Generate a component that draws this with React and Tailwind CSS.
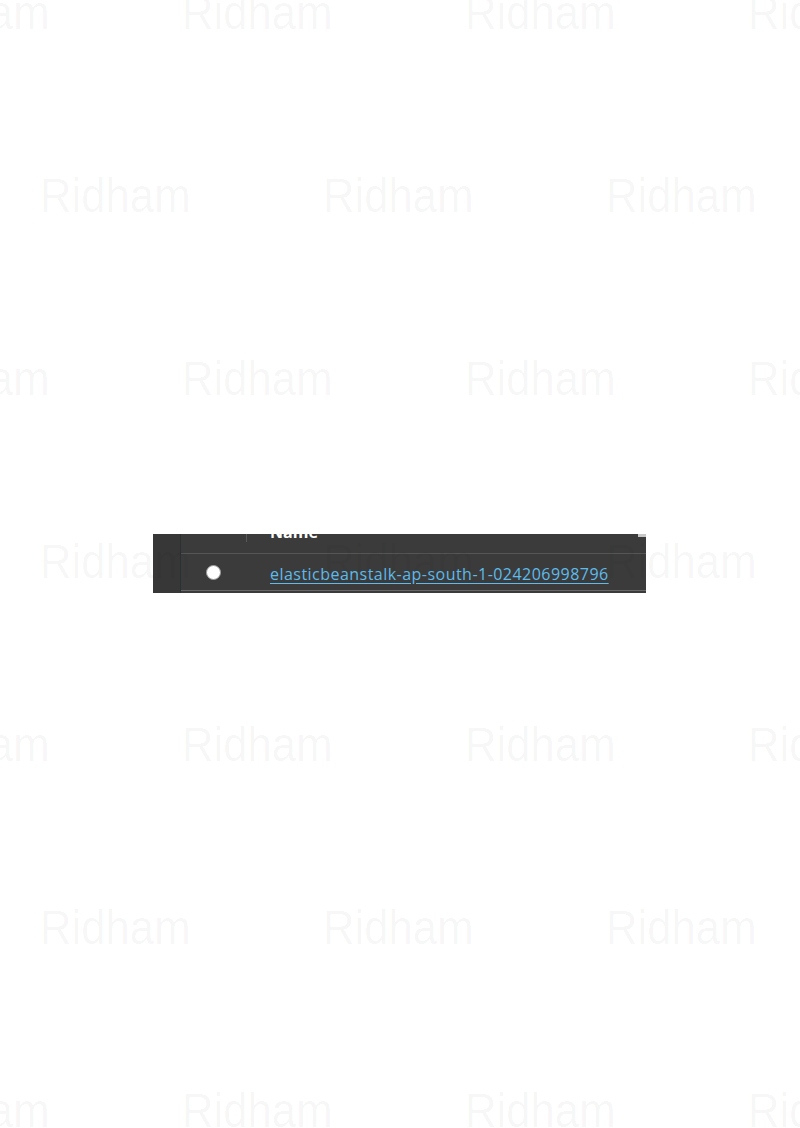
import React from "react";

const evenCols = [-101, 182, 465, 748];
const oddCols = [40, 323, 606];
const rows = [-11, 172, 355, 538, 721, 904, 1087];

function Watermark() {
  const marks = [];
  rows.forEach((top, i) => {
    const cols = i % 2 === 0 ? evenCols : oddCols;
    cols.forEach((left, j) => {
      marks.push(
        <span
          key={`${i}-${j}`}
          className="absolute origin-top-left scale-x-[0.91] text-[48px] leading-none whitespace-nowrap text-[rgba(0,0,0,0.04)]"
          style={{ top, left, fontFamily: '"Liberation Sans", Arial, sans-serif' }}
        >
          Ridham
        </span>
      );
    });
  });
  return <div className="pointer-events-none absolute inset-0 overflow-hidden">{marks}</div>;
}

export default function App() {
  return (
    <div className="relative w-[800px] h-[1128px] bg-white overflow-hidden">
      <div className="pt-[534px] pl-[153px]">
        <div
          className="flex w-[493px] h-[59px] overflow-hidden bg-[#3b3b3b]"
          style={{ fontFamily: '"Open Sans", "Noto Sans", sans-serif' }}
        >
          <div className="w-[28px] shrink-0 bg-[#373737] border-r border-[#2a3134]" />
          <div className="flex-1 flex flex-col">
            <div className="relative h-[20px] flex border-b border-[#565656]">
              <div className="w-[66px] shrink-0 flex justify-end">
                <div className="w-px h-[8px] bg-[#585858]" />
              </div>
              <div className="pl-[23px]">
                <div className="-mt-[10px] text-[16px] leading-[16px] font-bold text-white">Name</div>
              </div>
              <div className="absolute right-0 top-0 w-[8px] h-[3px] bg-[#c8c8c8]" />
            </div>
            <div className="h-[37px] flex items-center border-b border-[#686868]">
              <div className="w-[65px] shrink-0 flex justify-center">
                <div className="w-[15px] h-[15px] rounded-full bg-white border border-[#9a9a9a]" />
              </div>
              <div className="pl-[24px] pt-[3px]">
                <a className="text-[16px] leading-[20px] tracking-[0.47px] text-[#5ebbeb] underline underline-offset-[3px]" href="#">
                  elasticbeanstalk-ap-south-1-024206998796
                </a>
              </div>
            </div>
          </div>
        </div>
      </div>
      <Watermark />
    </div>
  );
}
